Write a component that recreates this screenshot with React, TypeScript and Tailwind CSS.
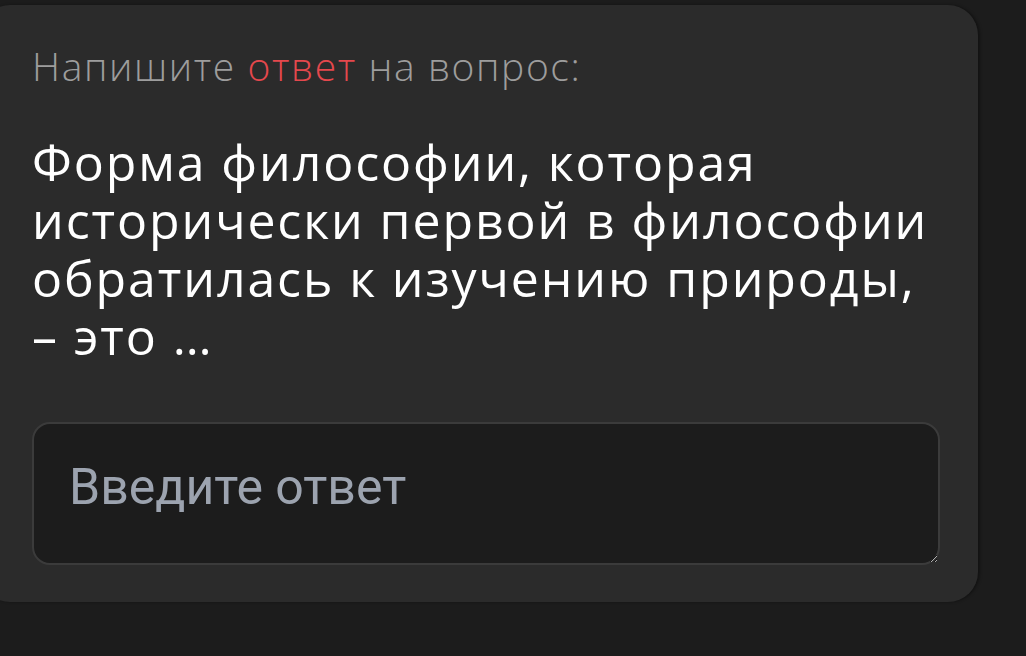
import React, { useState } from 'react';

const App = () => {
  const [answer, setAnswer] = useState('');

  return (
    <div className="min-h-screen w-full bg-[#1c1c1c] pt-[5px] overflow-hidden">
      <div className="ml-[-20px] w-[998px] rounded-[30px] bg-[#2b2b2b] pl-[52px] pr-[38px] pt-[39px] pb-[37px] shadow-[2px_0_3px_rgba(0,0,0,0.35)]">
        <p
          className="text-[39px] leading-[44px] font-light tracking-[1.6px] text-[#9d9d9d]"
          style={{ fontFamily: '"Open Sans", sans-serif' }}
        >
          Напишите <span className="text-[#e5484d]">ответ</span> на вопрос:
        </p>

        <h2
          className="mt-[45px] text-[50px] leading-[58px] font-normal tracking-[1.9px] text-white"
          style={{ fontFamily: '"Open Sans", sans-serif' }}
        >
          Форма философии, которая исторически первой в философии обратилась к изучению природы, – это …
        </h2>

        <textarea
          value={answer}
          onChange={(e) => setAnswer(e.target.value)}
          placeholder="Введите ответ"
          className="mt-[57px] block h-[143px] w-[908px] rounded-[18px] border-2 border-[#3b3b3b] bg-[#1c1c1c] px-[35px] pt-[34px] text-[50px] leading-[58px] text-white placeholder:text-[#9ca3af] outline-none"
          style={{ fontFamily: 'Roboto, sans-serif' }}
        />
      </div>
    </div>
  );
};

export default App;
